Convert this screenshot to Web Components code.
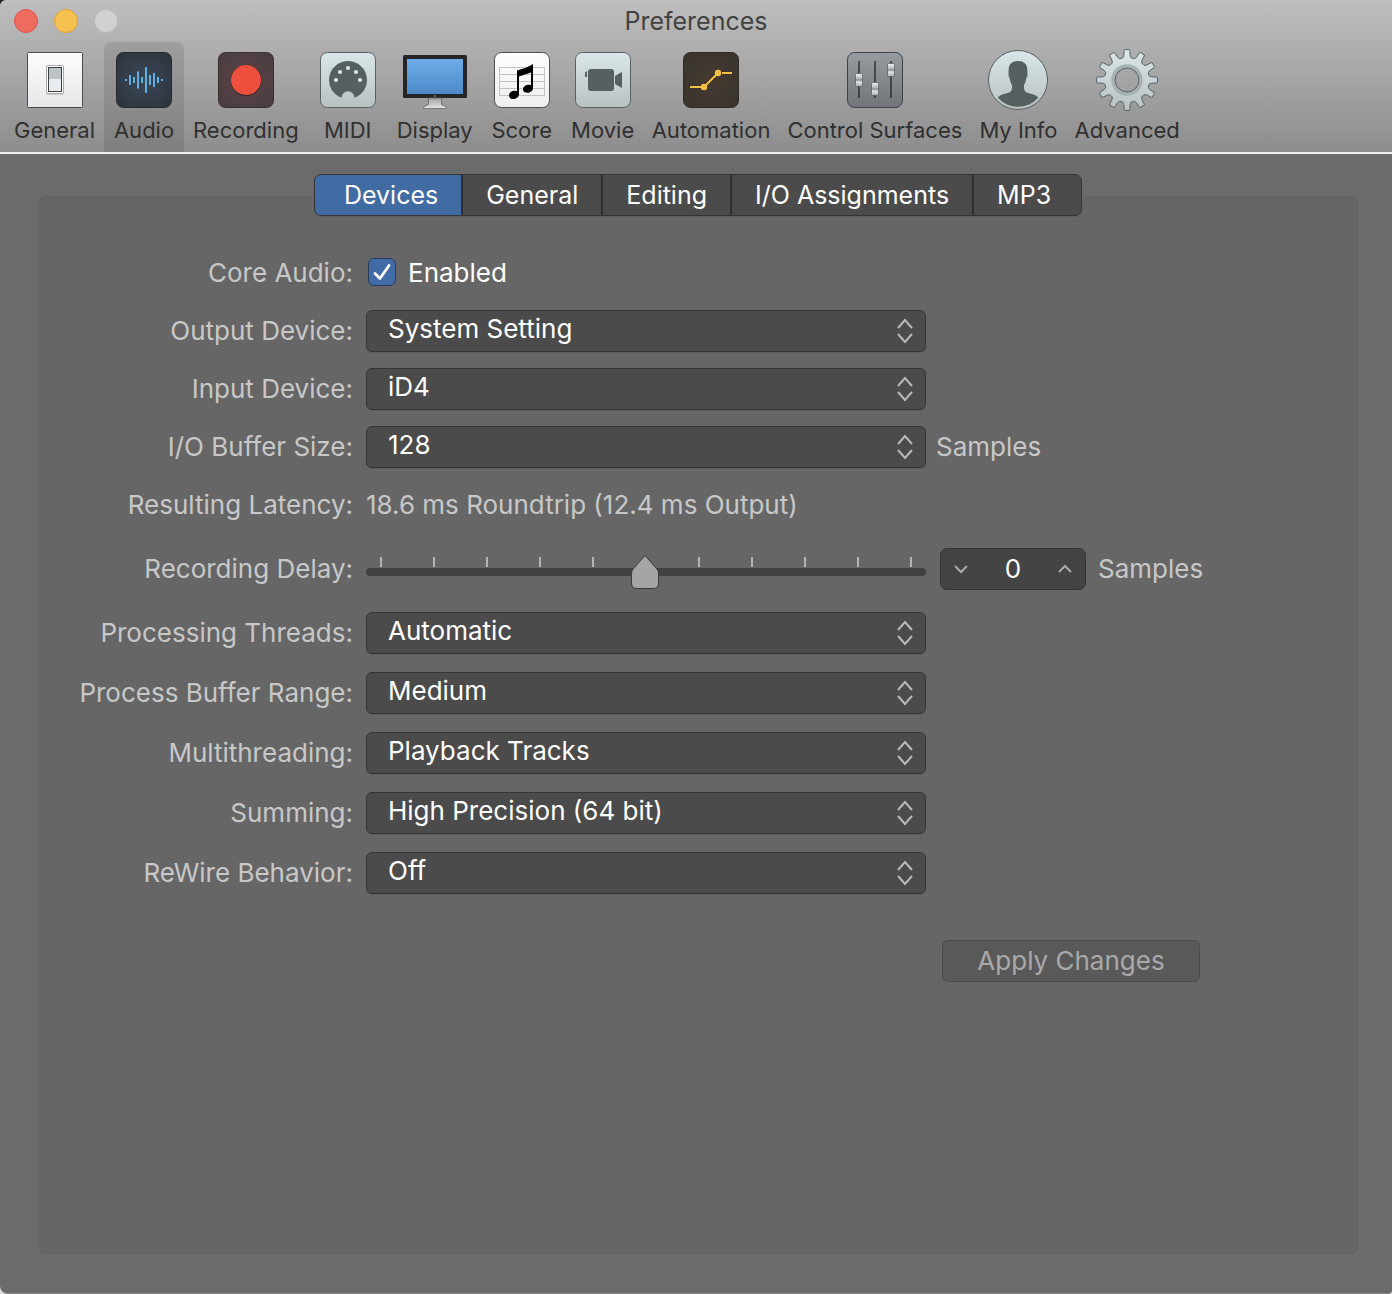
<!DOCTYPE html>
<html lang="en">
<head>
<meta charset="utf-8">
<meta name="viewport" content="width=device-width, initial-scale=1">
<title>Preferences</title>
<style>
  html { background: linear-gradient(#222 50%, #dcdcdc 50%); }
  body { margin: 0; font-family: Inter, "Liberation Sans", sans-serif; font-size: 26px; font-weight: 400; line-height: 30px; color: #c8c8c8; }
</style>
</head>
<body>
<prefs-window>
  <window-titlebar slot="header">Preferences</window-titlebar>
  <tool-bar slot="header">
    <tool-item icon="general">General</tool-item>
    <tool-item icon="audio" selected>Audio</tool-item>
    <tool-item icon="recording">Recording</tool-item>
    <tool-item icon="midi">MIDI</tool-item>
    <tool-item icon="display">Display</tool-item>
    <tool-item icon="score">Score</tool-item>
    <tool-item icon="movie">Movie</tool-item>
    <tool-item icon="automation">Automation</tool-item>
    <tool-item icon="surfaces">Control Surfaces</tool-item>
    <tool-item icon="info">My Info</tool-item>
    <tool-item icon="advanced">Advanced</tool-item>
  </tool-bar>
  <tab-strip tabs="Devices|General|Editing|I/O Assignments|MP3"></tab-strip>
  <pref-panel>
    <pref-group gap="small">
      <pref-check label="Core Audio:" text="Enabled"></pref-check>
      <pref-popup label="Output Device:" value="System Setting"></pref-popup>
      <pref-popup label="Input Device:" value="iD4"></pref-popup>
      <pref-popup label="I/O Buffer Size:" value="128" unit="Samples"></pref-popup>
      <pref-value label="Resulting Latency:">18.6 ms Roundtrip (12.4 ms Output)</pref-value>
    </pref-group>
    <pref-slider label="Recording Delay:" unit="Samples"></pref-slider>
    <pref-group>
      <pref-popup label="Processing Threads:" value="Automatic"></pref-popup>
      <pref-popup label="Process Buffer Range:" value="Medium"></pref-popup>
      <pref-popup label="Multithreading:" value="Playback Tracks"></pref-popup>
      <pref-popup label="Summing:" value="High Precision (64 bit)"></pref-popup>
      <pref-popup label="ReWire Behavior:" value="Off"></pref-popup>
    </pref-group>
    <apply-bar slot="footer">Apply Changes</apply-bar>
  </pref-panel>
</prefs-window>

<script>
const define = (name, render, setup) => customElements.define(name, class extends HTMLElement {
  connectedCallback() {
    if (this.shadowRoot) return;
    const root = this.attachShadow({ mode: "open" });
    const t = document.createElement("template");
    t.innerHTML = render(this);
    root.append(t.content.cloneNode(true));
    if (setup) setup(root, this);
  }
});

const base = `*{box-sizing:border-box} button,input,select{font:inherit;color:inherit;margin:0;padding:0;border:0;background:none}
  button:focus-visible,select:focus-visible,input:focus-visible{outline:3px solid #6f9bd1}`;

/* A twelve-toothed cog centred on the origin */
function cog() {
  const pts = [];
  const at = (r, a) => pts.push((r * Math.sin(a)).toFixed(2) + " " + (-r * Math.cos(a)).toFixed(2));
  for (let i = 0; i < 12; i++) {
    const c = i * Math.PI / 6;
    at(22.5, c - .19); at(24.5, c - .13); at(29.5, c - .1); at(30.5, c - .08);
    at(30.5, c + .08); at(29.5, c + .1); at(24.5, c + .13); at(22.5, c + .19);
  }
  return "M" + pts.join("L") + "Z";
}

const pale = `<linearGradient id="p" x2="0" y2="1"><stop stop-color="#dae6e9"/><stop offset="1" stop-color="#b9c1c2"/></linearGradient>`;
const tile = (fill, stroke, r = 7) => `<rect x="4.5" y="4.5" width="55" height="55" rx="${r}" fill="${fill}" stroke="${stroke}"/>`;
const glow = (a, b) => `<radialGradient id="g" r=".7"><stop stop-color="${a}"/><stop offset="1" stop-color="${b}"/></radialGradient>`;
const knob = (x, y) => `<rect x="${x - 3.5}" y="${y}" width="7" height="13" rx="1" fill="url(#k)" stroke="#55595d" stroke-width=".7"/>`;

const icons = {
  general: `<defs><linearGradient id="w" x2="0" y2="1"><stop stop-color="#fcfcfd"/><stop offset="1" stop-color="#e7e7eb"/></linearGradient></defs>
    ${tile("url(#w)", "#4b4b4b", 1)}
    <rect x="23" y="18" width="18" height="29" rx="2" fill="#aaa" opacity=".5"/><rect x="23.5" y="17.5" width="17" height="28" rx="1.5" fill="#fff" stroke="#a8a8a8"/>
    <rect x="25.5" y="19.5" width="13" height="24" fill="#e6ecf0" stroke="#3e4144"/><rect x="26" y="20" width="12" height="11" fill="#bcc4c8"/>`,
  audio: `<defs>${glow("#3a4656", "#2e333d")}</defs>${tile("url(#g)", "#272a31")}
    <g fill="#5fb0dc">${[2, 10, 6, 17, 6, 26, 10, 14, 6, 2].map((h, i) => `<rect x="${13 + i * 4}" y="${32 - h / 2}" width="2" height="${h}"/>`).join("")}</g>`,
  recording: `<defs>${glow("#5f4246", "#463d40")}</defs>${tile("url(#g)", "#3a3032")}<circle cx="32" cy="32.5" r="15.5" fill="#33282a"/><circle cx="32" cy="32" r="15" fill="#ec4f3d"/>`,
  midi: `<defs>${pale}</defs>${tile("url(#p)", "#596061")}
    <path d="M25.5 49.8A19 19 0 1 1 38.5 49.8A6.5 6.5 0 1 0 25.5 49.8Z" fill="#566060"/>
    <g fill="#dbe6e8"><circle cx="20" cy="32" r="2.1"/><circle cx="24" cy="24" r="2.1"/><circle cx="32" cy="20" r="2.1"/><circle cx="40" cy="24" r="2.1"/><circle cx="44" cy="32" r="2.1"/></g>`,
  display: `<defs><linearGradient id="b" x2="0" y2="1"><stop stop-color="#6eace9"/><stop offset="1" stop-color="#4b89c9"/></linearGradient>
    <linearGradient id="s" x2="0" y2="1"><stop stop-color="#a0a0a0"/><stop offset="1" stop-color="#e6e6e6"/></linearGradient></defs>
    <rect y="7" width="64" height="43" rx="1.5" fill="#262626"/><rect x="4" y="11" width="56" height="35" fill="url(#b)"/><circle cx="32" cy="48" r="1" fill="#777"/>
    <path d="M25.5 50H38.5V56.500L43.500 59V60.500H20.500V59L25.500 56.500Z" fill="url(#s)" stroke="#666" stroke-width=".8"/>`,
  score: `<defs><linearGradient id="w" x2="0" y2="1"><stop stop-color="#fff"/><stop offset="1" stop-color="#eee"/></linearGradient></defs>${tile("url(#w)", "#4e4e4e")}
    <path d="M9.500 19.500H54.500V47.500H9.500ZM9.500 26.500H54.500M9.500 33.500H54.500M9.500 40.500H54.500" fill="none" stroke="#c2c2c2"/>
    <path d="M27 22.500C32 21 38 19.500 43 16V40C43 46 33 46 33 41.500C33 38 37.500 36 41 37.200V24.500L29 28.500V46C29 52 19 53 19 47.500C19 44 23.500 42 27 43.200Z"/>`,
  movie: `<defs>${pale}</defs>${tile("url(#p)", "#596061")}
    <g fill="#566060"><rect x="17" y="21" width="26" height="22" rx="3"/><path d="M44 28L51 24V40L44 36ZM14 24.500L16 23V29H14Z"/></g>`,
  automation: `<defs>${glow("#463a30", "#37342e")}</defs>${tile("url(#g)", "#2c2b28")}
    <path d="M11 39H25L39 25H53" fill="none" stroke="#3a3128" stroke-width="4"/>
    <path d="M11 39H22M25 39L39 25M43 25H53" fill="none" stroke="#f5c244" stroke-width="2"/><g fill="#f5c244"><circle cx="25" cy="39" r="3.200"/><circle cx="39" cy="25" r="3.200"/></g>`,
  surfaces: `<defs><linearGradient id="c" x2="0" y2="1"><stop stop-color="#969c9f"/><stop offset="1" stop-color="#71757a"/></linearGradient>
    <linearGradient id="k" x2="0" y2="1"><stop stop-color="#eee"/><stop offset=".35" stop-color="#c2c2c2"/><stop offset=".5" stop-color="#8c8c8c"/><stop offset=".65" stop-color="#e2e2e2"/><stop offset="1" stop-color="#aaa"/></linearGradient></defs>
    ${tile("url(#c)", "#3f4347")}<path d="M16 13V50M32 13V50M48 13V50" stroke="#191b1d" stroke-width="1.200"/>${knob(16, 25.5)}${knob(32, 34.5)}${knob(48, 15.5)}`,
  info: `<defs>${pale}</defs><circle cx="32" cy="32" r="29.500" fill="url(#p)" stroke="#596061"/>
    <path d="M32 13C25 13 22 17 22.700 25C22 26 22.800 29 23.600 30C24 33 25 35.500 26 37C26.500 44 24.500 44.500 18 46C15 46.800 13 48 11.800 49.700A27 27 0 0 0 52.200 49.700C51 48 49 46.800 46 46C39.500 44.500 37.500 44 38 37C39 35.500 40 33 40.400 30C41.200 29 42 26 41.300 25C42 17 39 13 32 13Z" fill="#566060"/>`,
  advanced: `<defs>${pale}</defs><g transform="translate(32 32)"><path d="${cog()}M12 0A12 12 0 1 0 -12 0A12 12 0 1 0 12 0Z" fill="url(#p)" fill-rule="evenodd" stroke="#596061" stroke-linejoin="round"/>
    <circle r="14" fill="none" stroke="#a8b1b3" stroke-width="3.500"/><circle r="12" fill="none" stroke="#687072"/></g>`
};

define("prefs-window", () => `<style>${base}
  :host{display:flex;flex-direction:column;min-height:100vh;box-sizing:border-box;background:#6b6b6b;border-radius:6px 0 4px 8px;border-bottom:1px solid #858585;overflow:hidden}
  header{background:linear-gradient(#bebebe,#8d8d8d);border-bottom:2px solid #f0f0f0}
  main{flex:1;display:flex;flex-direction:column;padding:20px 34px 39px 38px}
  </style><header><slot name="header"></slot></header><main><slot></slot></main>`);

define("window-titlebar", () => `<style>${base}
  :host{display:grid;grid-template-columns:1fr auto 1fr;align-items:center;height:42px;padding:0 14px;box-sizing:border-box;color:#424242;font-size:25px}
  div{display:flex;gap:16px}
  button{width:24px;height:24px;border-radius:50%;border:1px solid #dd5349;background:#ee6b60}
  .min{background:#f6c14f;border-color:#dda23a}.zoom{background:#d1d1d1;border-color:#bdbdbd}
  h1{margin:0;font:inherit}
  </style><div><button aria-label="Close"></button><button class="min" aria-label="Minimize"></button><button class="zoom" aria-label="Zoom" disabled></button></div><h1><slot></slot></h1>`);

define("tool-bar", () => `<style>:host{display:flex;gap:1px;padding:0 6px;color:#303030;font-size:22px;line-height:28px}</style><slot></slot>`);

define("tool-item", el => `<style>${base}
  :host{display:block}
  button{display:flex;flex-direction:column;align-items:center;gap:4px;min-width:80px;height:110px;padding:6px 8px 0;border-radius:8px 8px 0 0;white-space:nowrap}
  :host([selected]) button{background:rgba(0,0,0,.1)}
  svg{display:block;width:64px;height:64px}
  </style><button><svg viewBox="0 0 64 64" aria-hidden="true">${icons[el.getAttribute("icon")]}</svg><span><slot></slot></span></button>`);

define("tab-strip", el => `<style>${base}
  :host{display:flex;justify-content:center;margin-bottom:-20px;z-index:1}
  div{display:flex;height:42px;border:1px solid #353535;border-radius:7px;background:#4b4b4b;overflow:hidden;box-shadow:0 1px 1px #5559;font-size:25px}
  button{padding:0 23px;color:#fff;border-left:2px solid #303030;white-space:nowrap}
  button:first-child{padding-left:29px;border-left:0}
  button:last-child{padding-right:30px}
  [aria-selected=true]{background:#416ba3}
  </style><div role="tablist">${el.getAttribute("tabs").split("|").map((t, i) => `<button role="tab" aria-selected="${!i}">${t}</button>`).join("")}</div>`,
  root => root.querySelector("div").addEventListener("click", e => {
    if (e.target.role === "tab") root.querySelectorAll("button").forEach(b => b.setAttribute("aria-selected", b === e.target));
  }));

define("pref-panel", () => `<style>
  :host{flex:1;display:flex;flex-direction:column;gap:22px;padding:55px 0 24px;box-sizing:border-box;background:#666;border:1px solid #626262;border-radius:8px}
  footer{margin-top:24px}
  </style><slot></slot><footer><slot name="footer"></slot></footer>`);

define("pref-group", () => `<style>:host{display:flex;flex-direction:column;gap:18px}:host([gap=small]){gap:16px}</style><slot></slot>`);

const row = `${base}
  :host{display:grid;grid-template-columns:314px minmax(0,560px) auto;column-gap:13px;align-items:center;min-height:42px;justify-content:start;white-space:nowrap}
  .name{text-align:right}`;

define("pref-check", el => `<style>${row}
  .box{display:flex;align-items:center;gap:12px;color:#fff;padding-left:2px}
  .tick{display:grid;padding-bottom:2px}.tick>*{grid-area:1/1}
  input{appearance:none;width:28px;height:28px;border-radius:6px;border:1px solid #263c5c;background:#4b4b4b}
  input:checked{background:#416ba5}
  svg{width:28px;height:28px;pointer-events:none;visibility:hidden}input:checked+svg{visibility:visible}
  </style><label class="name" for="c">${el.getAttribute("label")}</label>
  <label class="box"><span class="tick"><input id="c" type="checkbox" checked><svg viewBox="0 0 28 28"><path d="M7 15.500L12 20.500L21 7.500" fill="none" stroke="#fff" stroke-width="2.800" stroke-linecap="round" stroke-linejoin="round"/></svg></span>${el.getAttribute("text")}</label>`);

define("pref-popup", el => `<style>${row}
  .field{display:grid}.field>*{grid-area:1/1}
  select{appearance:none;width:100%;height:42px;padding:0 48px 5px 21px;border:1px solid #363636;border-radius:6px;background:#4b4b4b;color:#fff;box-shadow:0 1px 1px #5559}
  svg{justify-self:end;align-self:center;width:18px;height:26px;margin-right:12px;pointer-events:none}
  .unit{margin-left:-3px}
  </style><label class="name" for="s">${el.getAttribute("label")}</label>
  <span class="field"><select id="s"><option>${el.getAttribute("value")}</option></select>
  <svg viewBox="0 0 18 26"><path d="M2 10L9 2L16 10M2 16L9 24L16 16" fill="none" stroke="#b9b9b9" stroke-width="2"/></svg></span>
  ${el.hasAttribute("unit") ? `<span class="unit">${el.getAttribute("unit")}</span>` : ""}`);

define("pref-value", el => `<style>${row}</style><span class="name">${el.getAttribute("label")}</span><span><slot></slot></span>`);

define("pref-slider", el => `<style>${row}
  .slide{display:grid;height:42px}.slide>*{grid-area:1/1}
  .ticks{display:flex;justify-content:space-between;padding:9px 14px 0}.ticks i{width:2px;height:10px;background:#b4b4b4}
  .track{height:8px;margin-top:20px;border-radius:4px;background:#414141}
  .thumb{width:28px;height:36px;margin-top:6px;margin-left:calc((100% - 30px) * var(--pos,.5))}
  .slide input{width:100%;height:42px;opacity:0}
  .end{display:flex;align-items:center;gap:12px;margin-left:1px}
  .step{display:flex;align-items:center;width:146px;height:42px;border:1px solid #353535;border-radius:7px;background:#444}
  .step input{flex:1;min-width:0;text-align:center;color:#fff}
  .step button{display:grid;place-items:center;width:40px;height:40px}
  .step svg{width:16px;height:10px}
  path{fill:none;stroke:#aaa;stroke-width:2}
  .thumb path{fill:#a5a5a5;stroke:#3a3a3a;stroke-width:1}
  </style><label class="name" for="r">${el.getAttribute("label")}</label>
  <span class="slide"><span class="ticks">${"<i></i>".repeat(11)}</span><span class="track"></span>
  <svg class="thumb" viewBox="0 0 28 36"><path d="M14 1.500L26 15Q27.500 17 27.500 20V29Q27.500 34.500 22 34.500H6Q.5 34.500 .5 29V20Q.5 17 2 15Z"/></svg>
  <input id="r" type="range" min="-5000" max="5000" value="0"></span>
  <span class="end"><span class="step"><button aria-label="Decrease"><svg viewBox="0 0 16 10"><path d="M2 2L8 8L14 2"/></svg></button>
  <input type="text" id="n" value="0" aria-label="Recording delay in samples"><button aria-label="Increase"><svg viewBox="0 0 16 10"><path d="M2 8L8 2L14 8"/></svg></button></span><label for="n">${el.getAttribute("unit")}</label></span>`,
  root => {
    const range = root.getElementById("r"), num = root.getElementById("n");
    const show = v => {
      range.value = v; num.value = range.value;
      root.querySelector(".slide").style.setProperty("--pos", (+range.value + 5000) / 10000);
    };
    range.addEventListener("input", () => show(range.value));
    num.addEventListener("change", () => show(parseInt(num.value) || 0));
    const [down, up] = root.querySelectorAll("button");
    down.addEventListener("click", () => show(+range.value - 1));
    up.addEventListener("click", () => show(+range.value + 1));
  });

define("apply-bar", () => `<style>${base}
  :host{display:flex;padding-left:903px}
  button{width:258px;height:42px;border:1px solid #4c4c4c;border-radius:6px;background:#595959;color:#a9a9a9}
  </style><button disabled><slot></slot></button>`);
</script>
</body>
</html>
